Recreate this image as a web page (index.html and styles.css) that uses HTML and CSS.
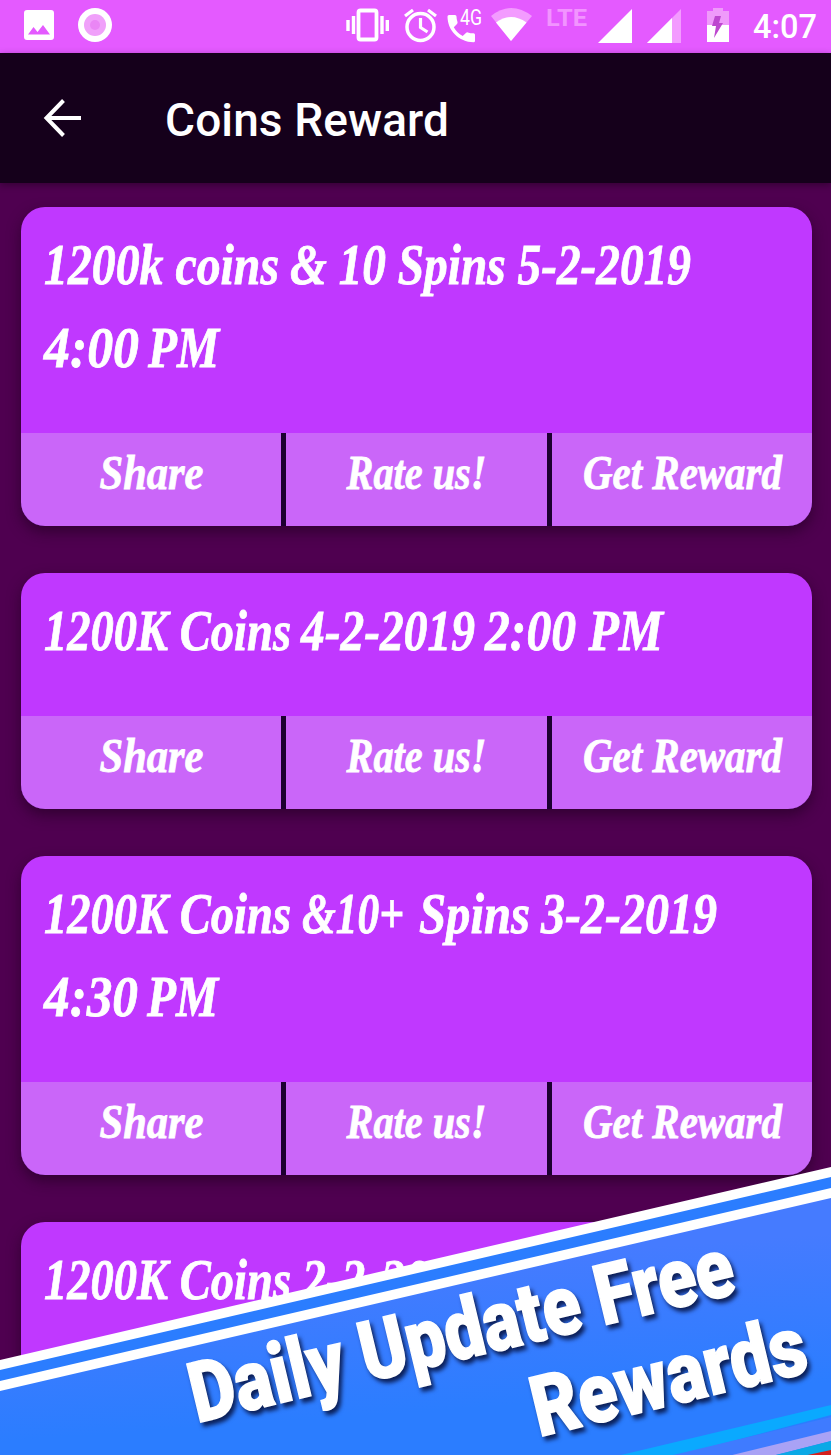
FILE: index.html
```html
<!DOCTYPE html>
<html lang="en">
<head>
<meta charset="UTF-8">
<meta name="viewport" content="width=device-width, initial-scale=1.0">
<title>Coins Reward</title>
<link rel="stylesheet" href="styles.css">
</head>
<body>

<div class="status-bar">
    <svg width="831" height="53" viewBox="0 0 831 53">
        <!-- picture + recorder -->
        <path fill="#fff" fill-rule="evenodd" d="M27 10h24q3 0 3 3v24q0 3-3 3H27q-3 0-3-3V13q0-3 3-3zM28 34.500h22l-7-9.500-5.500 7-4-5z"/>
        <circle cx="95" cy="25" r="17" fill="#fff"/>
        <circle cx="95" cy="25" r="11" fill="#f0a0fa"/>
        <circle cx="95" cy="25" r="5" fill="#ea86f5"/>
        <!-- vibrate -->
        <rect x="358.500" y="10.500" width="18" height="29" rx="2" fill="none" stroke="#fff" stroke-width="3.800"/>
        <path d="M348 20v11M353.500 16v18M382 16v18M387.300 20v11" stroke="#fff" stroke-width="3.400"/>
        <!-- alarm -->
        <circle cx="420.500" cy="27" r="13.500" fill="none" stroke="#fff" stroke-width="3.500"/>
        <path d="M420.500 18v9.500l7 4.500M405 16l8-6M436 16l-8-6" fill="none" stroke="#fff" stroke-width="3.200"/>
        <!-- call -->
        <path fill="#fff" d="M449 15h6q1.500 0 1.500 1.500 0 3 1 5.500.3 1-.5 2l-3.200 3.200q3.200 5.800 8.900 8.900l3.200-3.200q.9-.8 2-.5 2.600.9 5.600.9 1.500 0 1.500 1.500v6q0 1.500-1.500 1.500C459 42 447.500 30.500 447.500 16.500q0-1.500 1.500-1.500z"/>
        <text class="net" x="460" y="25" textLength="22" lengthAdjust="spacingAndGlyphs">4G</text>
        <!-- wifi -->
        <path d="M511 41L491 16q20-16 41 0z" fill="#f39bff"/>
        <path d="M511 41L496 22.500q15-11 30.500 0z" fill="#fff"/>
        <text class="lte" x="546" y="26" textLength="41" lengthAdjust="spacingAndGlyphs">LTE</text>
        <!-- signal -->
        <path d="M598 43l34-34v34z" fill="#fff"/>
        <path d="M647 43l34-34v34z" fill="#f39bff"/>
        <path d="M647 43l25-25v25z" fill="#fff"/>
        <!-- battery -->
        <path d="M707 11h6V8h10v3h6v14h-22z" fill="#ef9afa"/>
        <path d="M707 25h22v17h-22z" fill="#fff"/>
        <path d="M715 16h6l-2 7h4l-9 15 2-12h-4z" fill="#bd47cf"/>
        <text class="clock" x="753" y="37.500" textLength="64" lengthAdjust="spacingAndGlyphs">4:07</text>
    </svg>
</div>

<div class="header">
    <svg class="back" width="40" height="40" viewBox="0 0 40 40">
        <path d="M38 20H4M20.500 2.500L3.500 20l17 17.500" fill="none" stroke="#fff" stroke-width="4"/>
    </svg>
    <h1>Coins Reward</h1>
</div>

<div class="list">
    <div class="card">
        <div class="card-body">
            <svg class="line"><text y="53"><tspan x="23" textLength="235" lengthAdjust="spacingAndGlyphs">1200k coins</tspan> <tspan x="269" textLength="401" lengthAdjust="spacingAndGlyphs">&amp; 10 Spins 5-2-2019</tspan></text></svg>
            <svg class="line"><text y="53"><tspan x="23" textLength="95" lengthAdjust="spacingAndGlyphs">4:00</tspan> <tspan x="127" textLength="71" lengthAdjust="spacingAndGlyphs">PM</tspan></text></svg>
        </div>
        <div class="actions">
            <svg class="action"><text x="130.500" y="56" textLength="104" lengthAdjust="spacingAndGlyphs">Share</text></svg>
            <svg class="action"><text x="130.500" y="56" textLength="140" lengthAdjust="spacingAndGlyphs">Rate us!</text></svg>
            <svg class="action"><text x="130.500" y="56" textLength="199" lengthAdjust="spacingAndGlyphs">Get Reward</text></svg>
        </div>
    </div>

    <div class="card">
        <div class="card-body">
            <svg class="line"><text y="53"><tspan x="23" textLength="247" lengthAdjust="spacingAndGlyphs">1200K Coins</tspan> <tspan x="280" textLength="174" lengthAdjust="spacingAndGlyphs">4-2-2019</tspan> <tspan x="464" textLength="178" lengthAdjust="spacingAndGlyphs">2:00 PM</tspan></text></svg>
        </div>
        <div class="actions">
            <svg class="action"><text x="130.500" y="56" textLength="104" lengthAdjust="spacingAndGlyphs">Share</text></svg>
            <svg class="action"><text x="130.500" y="56" textLength="140" lengthAdjust="spacingAndGlyphs">Rate us!</text></svg>
            <svg class="action"><text x="130.500" y="56" textLength="199" lengthAdjust="spacingAndGlyphs">Get Reward</text></svg>
        </div>
    </div>

    <div class="card">
        <div class="card-body">
            <svg class="line"><text y="53"><tspan x="23" textLength="247" lengthAdjust="spacingAndGlyphs">1200K Coins</tspan> <tspan x="281" textLength="102" lengthAdjust="spacingAndGlyphs">&amp;10+</tspan> <tspan x="398" textLength="111" lengthAdjust="spacingAndGlyphs">Spins</tspan> <tspan x="520" textLength="176" lengthAdjust="spacingAndGlyphs">3-2-2019</tspan></text></svg>
            <svg class="line"><text y="53"><tspan x="23" textLength="94" lengthAdjust="spacingAndGlyphs">4:30</tspan> <tspan x="126" textLength="71" lengthAdjust="spacingAndGlyphs">PM</tspan></text></svg>
        </div>
        <div class="actions">
            <svg class="action"><text x="130.500" y="56" textLength="104" lengthAdjust="spacingAndGlyphs">Share</text></svg>
            <svg class="action"><text x="130.500" y="56" textLength="140" lengthAdjust="spacingAndGlyphs">Rate us!</text></svg>
            <svg class="action"><text x="130.500" y="56" textLength="199" lengthAdjust="spacingAndGlyphs">Get Reward</text></svg>
        </div>
    </div>

    <div class="card">
        <div class="card-body">
            <svg class="line"><text y="53"><tspan x="23" textLength="247" lengthAdjust="spacingAndGlyphs">1200K Coins</tspan> <tspan x="281" textLength="174" lengthAdjust="spacingAndGlyphs">2-2-2019</tspan></text></svg>
        </div>
        <div class="actions"></div>
    </div>
</div>

<!-- ribbon over the bottom of the list -->
<svg class="banner" width="831" height="295" viewBox="0 1160 831 295">
    <defs>
        <linearGradient id="blue" x1="0" y1="0" x2="0.230" y2="1">
            <stop offset="0.350" stop-color="#457bff"/>
            <stop offset="0.900" stop-color="#2b7dff"/>
        </linearGradient>
    </defs>
    <path d="M0 1360L831 1167V1455H0z" fill="#fff"/>
    <path d="M0 1370L831 1177V1188L0 1381z" fill="#2b7dff"/>
    <path d="M0 1391L831 1198V1455H0z" fill="url(#blue)"/>
    <path d="M600 1460L831 1405V1415L660 1460z" fill="#0aa9ff"/>
    <path d="M665 1457L831 1417V1432L738 1455z" fill="#3f7bff"/>
    <path d="M720 1458L831 1431V1441L768 1457z" fill="#a9a2f5"/>
    <path d="M768 1457L831 1441V1457z" fill="#0aa9e6"/>
    <path d="M803 1456L831 1450V1456z" fill="#d5201c"/>
    <g class="banner-text">
        <text transform="translate(197 1423) rotate(-13.500)" textLength="557" lengthAdjust="spacingAndGlyphs">Daily Update Free</text>
        <text transform="translate(539 1437) rotate(-13.500)" textLength="280" lengthAdjust="spacingAndGlyphs">Rewards</text>
    </g>
</svg>

</body>
</html>
```
FILE: styles.css
```css
body {
    background-color: #4f0050;
    color: #fff;
    font-family: Roboto, "Liberation Sans", sans-serif;
    margin: 0;
    padding: 0;
    height: 1455px;
    overflow: hidden;
    position: relative;
}
svg {
    display: block;
}
svg text {
    fill: #fff;
}
.status-bar {
    background-color: #e45aff;
    height: 53px;
}
.net {
    font-size: 22px;
}
.status-bar .lte {
    fill: #f294ff;
    font-size: 24px;
    font-weight: bold;
}
.clock {
    font-size: 34px;
    font-weight: 500;
}
.header {
    background-color: #15001b;
    height: 130px;
    display: flex;
    align-items: center;
    padding-left: 43px;
    box-shadow: 0 2px 7px rgba(0, 0, 0, 0.35);
}
.header h1 {
    margin: 3px 0 0 82px;
    font-size: 46px;
    font-weight: 500;
    letter-spacing: 0.1px;
}
.list {
    display: flex;
    flex-direction: column;
    gap: 47px;
    padding: 24px 19px 0 21px;
}
.card {
    background-color: #c038ff;
    border-radius: 24px;
    overflow: hidden;
    box-shadow: 0 6px 14px rgba(30, 0, 30, 0.6);
}
.card-body {
    padding: 24px 0 36px;
}
.line {
    width: 100%;
    height: 83px;
    font: italic bold 58px "Liberation Serif", serif;
}
.line text,
.action text {
    stroke: #fff;
    stroke-width: 0.8px;
}
.actions {
    display: grid;
    grid-template-columns: 1fr 1fr 1fr;
    gap: 5px;
    height: 93px;
    background-color: #1c0030;
}
.action {
    width: 100%;
    height: 93px;
    background-color: #ca66f9;
    font: italic bold 49px "Liberation Serif", serif;
}
.action text {
    text-anchor: middle;
}
.banner {
    position: absolute;
    left: 0;
    bottom: 0;
}
.banner-text {
    font: 900 84px Roboto, sans-serif;
    filter: drop-shadow(3px 4px 2px rgba(5, 15, 60, 0.85));
}
.banner-text text {
    stroke: #fff;
    stroke-width: 1.5px;
}
```
